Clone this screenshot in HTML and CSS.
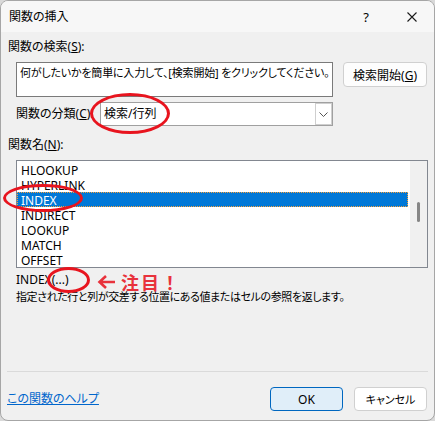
FILE: index.html
```html
<!DOCTYPE html>
<html lang="ja">

<head>
    <meta charset="UTF-8">
    <meta name="viewport" content="width=device-width, initial-scale=1.0">
    <title>関数の挿入</title>
    <link rel="stylesheet" href="styles.css">
</head>

<body>
    <div class="window">
        <div class="titlebar">
            <span class="title">関数の挿入</span>
            <span class="help">?</span>
            <span class="close">
                <svg width="10" height="10" viewBox="0 0 10 10">
                    <path d="M0.5 0.5 L9.5 9.5 M9.5 0.5 L0.5 9.5" stroke="#1a1a1a" stroke-width="1.1" fill="none" />
                </svg>
            </span>
        </div>

        <div class="content">
            <div class="label">関数の検索(<u>S</u>):</div>
            <div class="search-row">
                <div class="search-box">何がしたいかを簡単に入力して、[検索開始] をクリックしてください。</div>
                <button type="button" class="btn search-btn">検索開始(<u>G</u>)</button>
            </div>

            <div class="category-row">
                <span class="category-label">関数の分類(<u>C</u>):</span>
                <div class="combo">
                    <span class="combo-value">検索/行列</span>
                    <span class="combo-btn">
                        <svg width="9" height="5" viewBox="0 0 9 5">
                            <path d="M0.5 0.5 L4.5 4.5 L8.5 0.5" stroke="#555" stroke-width="1" fill="none" />
                        </svg>
                    </span>
                </div>
            </div>

            <div class="label name-label">関数名(<u>N</u>):</div>
            <div class="listbox">
                <ul class="items">
                    <li>HLOOKUP</li>
                    <li>HYPERLINK</li>
                    <li class="selected">INDEX</li>
                    <li>INDIRECT</li>
                    <li>LOOKUP</li>
                    <li>MATCH</li>
                    <li>OFFSET</li>
                </ul>
                <div class="scrollbar">
                    <div class="thumb"></div>
                </div>
            </div>

            <div class="syntax">INDEX(...)</div>
            <div class="desc">指定された行と列が交差する位置にある値またはセルの参照を返します。</div>

            <div class="separator"></div>

            <div class="footer">
                <a href="#" class="help-link">この関数のヘルプ</a>
                <div class="footer-btns">
                    <button type="button" class="btn ok-btn">OK</button>
                    <button type="button" class="btn cancel-btn">キャンセル</button>
                </div>
            </div>
        </div>

        <!-- 赤い注釈 -->
        <div class="mark mark-category"></div>
        <div class="mark mark-index"></div>
        <div class="mark mark-args"></div>
        <div class="note">
            <svg class="note-arrow" width="19" height="16" viewBox="0 0 19 16">
                <path d="M18 8 H3 M9 2 L2.5 8 L9 14" stroke="#e8323c" stroke-width="2.6" fill="none" />
            </svg>
            <span>注目！</span>
        </div>
    </div>
</body>

</html>
```

FILE: styles.css
```css
* {
    box-sizing: border-box;
}

body {
    margin: 0;
    background-color: #d9d9d9;
    font-family: "Noto Sans", "Noto Sans CJK JP", sans-serif;
    font-size: 12px;
    line-height: 16px;
    color: #000;
    font-feature-settings: "palt";
}

u {
    text-decoration-thickness: 1px;
    text-underline-offset: 1px;
}

.window {
    position: relative;
    width: 435px;
    height: 421px;
    background-color: #f0f0f0;
    border: 1px solid #a6a6a6;
    border-radius: 8px;
    overflow: hidden;
}

.titlebar {
    height: 31px;
    background-color: #f7f7f7;
    display: flex;
    align-items: center;
    padding-left: 8px;
}

.title {
    flex-grow: 1;
}

.help {
    width: 20px;
    text-align: center;
    font-size: 13px;
    margin-right: 31px;
}

.close {
    width: 10px;
    height: 10px;
    display: flex;
    margin-right: 17px;
}

.content {
    padding: 0 6px 0 7px;
}

.label {
    margin-top: 7px;
}

.search-row {
    display: flex;
    align-items: flex-start;
    margin-top: 7px;
    margin-left: 8px;
}

.search-box {
    width: 317px;
    height: 35px;
    background-color: #fff;
    border: 1px solid #7a7a7a;
    padding: 2px 3px;
    white-space: nowrap;
    overflow: hidden;
    font-size: 11px;
    letter-spacing: -0.2px;
}

.btn {
    font-family: "Noto Sans", "Noto Sans CJK JP", sans-serif;
    font-size: 12px;
    font-feature-settings: "palt";
    color: #000;
    background-color: #fdfdfd;
    border: 1px solid #d0d0d0;
    border-radius: 4px;
    padding: 0;
}

.search-btn {
    width: 84px;
    height: 25px;
    margin-left: 10px;
}

.category-row {
    display: flex;
    align-items: center;
    margin-top: 5px;
    margin-left: 8px;
}

.category-label {
    width: 84px;
}

.combo {
    width: 233px;
    height: 24px;
    background-color: #fff;
    border: 1px solid #a0a0a0;
    display: flex;
    align-items: stretch;
}

.combo-value {
    flex-grow: 1;
    padding-left: 3px;
    line-height: 22px;
}

.combo-btn {
    width: 17px;
    border: 1px solid #cfcfcf;
    display: flex;
    align-items: center;
    justify-content: center;
}

.name-label {
    margin-top: 11px;
}

.listbox {
    margin-top: 7px;
    margin-left: 8px;
    height: 108px;
    background-color: #fff;
    border: 1px solid #828790;
    display: flex;
}

.items {
    list-style: none;
    margin: 0;
    padding: 1px 2px 0 0;
    flex-grow: 1;
}

.items li {
    height: 15px;
    line-height: 15px;
    padding-left: 3px;
    border: 1px solid transparent;
}

.items .selected {
    background-color: #0078d7;
    color: #fff;
    border: 1px dotted #f7a13a;
}

.scrollbar {
    width: 17px;
    background-color: #f0f0f0;
}

.thumb {
    width: 3px;
    height: 20px;
    margin: 41px 0 0 7px;
    background-color: #868686;
    border-radius: 2px;
}

.syntax {
    margin-top: 4px;
    margin-left: 8px;
}

.desc {
    margin-top: 1px;
    margin-left: 8px;
    font-size: 11px;
    letter-spacing: -0.4px;
}

.separator {
    margin-top: 66px;
    margin-left: -1px;
    height: 1px;
    background-color: #dadada;
}

.footer {
    display: flex;
    justify-content: space-between;
    align-items: center;
    margin-top: 15px;
    margin-left: -1px;
}

.help-link {
    color: #0066cc;
    text-decoration: underline;
}

.footer-btns {
    display: flex;
    gap: 11px;
    margin-right: 1px;
}

.ok-btn,
.cancel-btn {
    width: 73px;
    height: 24px;
}

.ok-btn {
    background-color: #e0eef9;
    border-color: #0067c0;
}

.cancel-btn {
    background-color: #fff;
    font-size: 11px;
}

/* 注釈 */
.mark {
    position: absolute;
    border: 3px solid #e8141e;
    border-radius: 50%;
}

.mark-category {
    left: 89px;
    top: 92px;
    width: 80px;
    height: 41px;
}

.mark-index {
    left: 2px;
    top: 183px;
    width: 80px;
    height: 28px;
}

.mark-args {
    left: 46px;
    top: 266px;
    width: 43px;
    height: 26px;
}

.note {
    position: absolute;
    left: 96px;
    top: 271px;
    display: flex;
    align-items: center;
    gap: 5px;
    color: #e8323c;
    font-size: 18px;
    line-height: 20px;
    font-weight: bold;
    letter-spacing: 2px;
    font-family: "Noto Sans CJK JP", sans-serif;
    font-feature-settings: normal;
}
```
